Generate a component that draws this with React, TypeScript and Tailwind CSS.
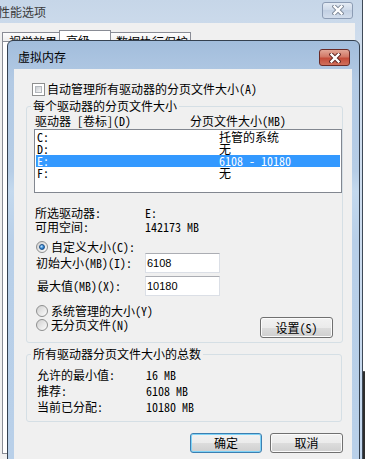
import React from 'react';

// 12px "宋体"-like UI text: CJK full width, latin half width
const ui = "font-['Noto_Sans_Mono_CJK_SC','Noto_Sans_CJK_SC',sans-serif] text-[12px] leading-[14px] text-black";
const title = "font-['Noto_Sans_CJK_SC',sans-serif] text-[12px] leading-[14px]";

function CloseX({ outline }: { outline: string }) {
  return (
    <svg width="12" height="10" viewBox="0 0 12 10">
      <path d="M2.5 1.5 L9.5 8.5 M9.5 1.5 L2.5 8.5" stroke={outline} strokeWidth="4.2" strokeLinecap="square" />
      <path d="M2.5 1.5 L9.5 8.5 M9.5 1.5 L2.5 8.5" stroke="#fff" strokeWidth="2.4" strokeLinecap="square" />
    </svg>
  );
}

function CheckBox() {
  return (
    <span className="flex w-[13px] h-[13px] border border-[#8e8f8f] bg-white p-[2px]">
      <span className="flex-1 border border-[#b4b8bd] bg-[linear-gradient(135deg,#c9cdd2,#f7f7f7)]" />
    </span>
  );
}

function Radio({ on }: { on?: boolean }) {
  return (
    <span className="flex w-[12px] h-[12px] items-center justify-center rounded-full border border-[#8e8f8f] bg-[linear-gradient(135deg,#cfcfcf,#fdfdfd)]">
      {on && (
        <span className="w-[6px] h-[6px] rounded-full border border-[#1d4f86] bg-[radial-gradient(circle_at_35%_35%,#bfe6ff,#2a7fd0_60%,#1b5aa0)]" />
      )}
    </span>
  );
}

function Btn({ label, def, w }: { label: string; def?: boolean; w: string }) {
  return (
    <div
      className={`${w} h-[20px] flex items-center justify-center rounded-[3px] border bg-[linear-gradient(#f2f2f2,#ebebeb_50%,#dddddd_50%,#cfcfcf)] ${
        def ? 'border-[#3c7fb1] shadow-[inset_0_0_0_1px_#7fd3f7]' : 'border-[#707070] shadow-[inset_0_0_0_1px_#fbfbfb]'
      }`}
    >
      {label}
    </div>
  );
}

const drives = [
  { d: 'C:', size: '托管的系统' },
  { d: 'D:', size: '无' },
  { d: 'E:', size: '6108 - 10180', sel: true },
  { d: 'F:', size: '无' },
];

export default function App() {
  return (
    <div className={`relative w-[365px] h-[459px] overflow-hidden bg-white ${ui}`}>
      {/* window behind, bottom right */}
      <div className="absolute right-0 top-[371px] w-[3px] h-[88px] bg-[#2e2e2e] border-t border-[#555]" />

      {/* 性能选项 (background window) */}
      <div className="absolute left-[-20px] top-0 w-[383px] h-[470px] flex flex-col border-r border-[#3f4a58] bg-[linear-gradient(#c6d6e8,#d3e0ef_60px,#c3d7ee)]">
        <div className="h-[23px] flex items-center">
          <span className={`pl-[18px] text-[#3a3a3a] ${title}`}>性能选项</span>
          <div className="ml-auto mr-[9px] mb-[3px] w-[31px] h-[17px] flex items-center justify-center rounded-[3px] border border-[#8c9cb4] bg-[linear-gradient(#e4ebf4,#ccd8e8_50%,#c2d0e3_50%,#d2ddec)]">
            <CloseX outline="#7d8898" />
          </div>
        </div>
        <div className="flex-1 mr-[7px] bg-[#f0f0f0] flex flex-col">
          <div className="flex pl-[22px] pt-[7px] h-[19px] items-start">
            <div className="mt-[2px] w-[58px] h-[10px] border border-b-0 border-[#898c95] bg-[linear-gradient(#fdfdfd,#ececec)] pl-[6px] pt-[2px] overflow-hidden">视觉效果</div>
            <div className="-ml-px w-[52px] h-[13px] border border-b-0 border-[#898c95] bg-white pl-[6px] pt-[3px] overflow-hidden">高级</div>
            <div className="-ml-px mt-[2px] w-[81px] h-[10px] border border-b-0 border-[#898c95] bg-[linear-gradient(#fdfdfd,#ececec)] pl-[5px] pt-[2px] overflow-hidden">数据执行保护</div>
          </div>
          <div className="ml-[22px] -mt-px h-[413px] w-[340px] border border-[#898c95] bg-white" />
        </div>
      </div>

      {/* 虚拟内存 dialog */}
      <div className="absolute left-[7px] top-[40px] w-[353px] h-[430px] flex flex-col rounded-t-[6px] border border-[#34404f] bg-[linear-gradient(#a2bddc,#b3cae4_40px,#b6cde6_130px,#c4d9ee_150px,#b8cfe8_200px,#b9d0e9)]">
        <div className="h-[28px] flex items-start">
          <span className={`pl-[10px] pt-[9px] ${title}`}>虚拟内存</span>
          <div className="ml-auto mr-[9px] mt-[8px] w-[31px] h-[17px] flex items-center justify-center rounded-[3px] border border-[#6b2a26] bg-[linear-gradient(#e3a797,#d27866_45%,#c44c39_55%,#d0705c)]">
            <CloseX outline="#5c2320" />
          </div>
        </div>

        <div className="flex-1 ml-[6px] mr-[7px] bg-[#f0f0f0] flex flex-col">
          <div className="mt-[13px] h-[14px] flex items-center pl-[18px]">
            <CheckBox />
            <span className="ml-[2px]">自动管理所有驱动器的分页文件大小(A)</span>
          </div>

          <fieldset className="mt-[3px] ml-[12px] w-[316px] rounded-[3px] border border-[#d5dfe5] pb-[4px]">
            <legend className="ml-[4px] px-[2px] leading-[14px]">每个驱动器的分页文件大小</legend>
            <div className="pl-[7px] flex flex-col">
              <div className="mt-[1px] h-[14px] flex items-center">
                <span className="w-[156px] pl-[1px]">驱动器 [卷标](D)</span>
                <span>分页文件大小(MB)</span>
              </div>
              <div className="mt-[1px] w-[308px] h-[64px] border border-[#828790] bg-white p-[1px]">
                {drives.map((r) => (
                  <div
                    key={r.d}
                    className={`h-[12px] flex items-center leading-[12px] ${r.sel ? 'bg-[#3399ff] text-white' : ''}`}
                  >
                    <span className="w-[183px] pl-[1px]">{r.d}</span>
                    <span>{r.size}</span>
                  </div>
                ))}
              </div>

              <div className="mt-[13px] h-[14px] flex items-center">
                <span className="w-[111px] pl-[1px]">所选驱动器:</span>
                <span>E:</span>
              </div>
              <div className="h-[14px] flex items-center">
                <span className="w-[111px] pl-[1px]">可用空间:</span>
                <span>142173 MB</span>
              </div>

              <div className="mt-[6px] h-[13px] flex items-center pl-[2px]">
                <Radio on />
                <span className="ml-[3px]">自定义大小(C):</span>
              </div>
              <div className="h-[20px] flex items-center">
                <span className="w-[111px] pl-[2px]">初始大小(MB)(I):</span>
                <div className="w-[75px] h-[20px] flex items-center border border-[#dbdfe6] border-t-[#abadb3] bg-white pl-[1px] font-['Liberation_Sans',sans-serif] text-[11px]">6108</div>
              </div>
              <div className="mt-[3px] h-[20px] flex items-center">
                <span className="w-[111px] pl-[3px]">最大值(MB)(X):</span>
                <div className="w-[75px] h-[20px] flex items-center border border-[#dbdfe6] border-t-[#abadb3] bg-white pl-[1px] font-['Liberation_Sans',sans-serif] text-[11px]">10180</div>
              </div>

              <div className="mt-[8px] h-[13px] flex items-center pl-[2px]">
                <Radio />
                <span className="ml-[3px]">系统管理的大小(Y)</span>
              </div>
              <div className="h-[21px] flex items-start">
                <div className="w-[226px] mt-[1px] h-[14px] flex items-center pl-[2px]">
                  <Radio />
                  <span className="ml-[3px]">无分页文件(N)</span>
                </div>
                <Btn label="设置(S)" w="w-[73px] !h-[21px]" />
              </div>
            </div>
          </fieldset>

          <fieldset className="mt-[4px] ml-[12px] w-[316px] rounded-[3px] border border-[#d5dfe5] pb-[6px]">
            <legend className="ml-[4px] px-[2px] leading-[14px]">所有驱动器分页文件大小的总数</legend>
            <div className="pl-[7px] mt-[6px] flex flex-col">
              {[
                ['允许的最小值:', '16 MB'],
                ['推荐:', '6108 MB'],
                ['当前已分配:', '10180 MB'],
              ].map(([k, v]) => (
                <div key={k} className="h-[16px] flex items-center">
                  <span className="w-[112px] pl-[3px]">{k}</span>
                  <span>{v}</span>
                </div>
              ))}
            </div>
          </fieldset>

          <div className="mt-[11px] flex justify-end gap-[8px] pr-[9px]">
            <Btn label="确定" def w="w-[72px]" />
            <Btn label="取消" w="w-[73px]" />
          </div>
        </div>
      </div>
    </div>
  );
}
